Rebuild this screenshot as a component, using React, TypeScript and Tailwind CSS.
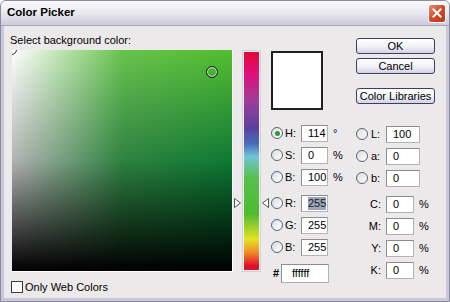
import React from 'react';

const font = { fontFamily: '"Liberation Sans", Arial, sans-serif' };

function Radio({ checked = false }: { checked?: boolean }) {
  return (
    <span className="flex h-[12px] w-[12px] shrink-0 items-center justify-center rounded-full border border-[#56627a] bg-gradient-to-br from-[#dcdcdc] to-white">
      {checked && <span className="h-[5px] w-[5px] rounded-full bg-[#2f9a3c]" />}
    </span>
  );
}

function Field({ value, w, selected = false }: { value: string; w: string; selected?: boolean }) {
  return (
    <div className={`${w} flex h-[17px] items-center border border-[#b4b2b2] border-t-[#8e8c8c] border-l-[#8e8c8c] bg-white pl-[6px] text-[11px] text-black`}>
      {selected ? <span className="bg-[#9aa4bd] leading-[13px] text-[#222]">{value}</span> : value}
    </div>
  );
}

function XpButton({ label }: { label: string }) {
  return (
    <button className="flex h-[16px] w-[79px] items-center justify-center whitespace-nowrap rounded-[3px] border border-[#3f3d68] bg-gradient-to-b from-white via-[#f3f3f6] to-[#d4d3e2] text-[11px] leading-none text-black">
      {label}
    </button>
  );
}

// H / S / B / R / G / B rows
function HsbRow({ name, value, unit, checked, selected }: { name: string; value: string; unit?: string; checked?: boolean; selected?: boolean }) {
  return (
    <div className="flex h-[22px] items-center">
      <Radio checked={checked} />
      <span className="w-[18px] pl-[2px]">{name}</span>
      <Field value={value} w="w-[27px]" selected={selected} />
      {unit && <span className="ml-[5px]">{unit}</span>}
    </div>
  );
}

function LabRow({ name, value }: { name: string; value: string }) {
  return (
    <div className="flex h-[22px] items-center">
      <Radio />
      <span className="w-[18px] pl-[3px]">{name}</span>
      <Field value={value} w="w-[34px]" />
    </div>
  );
}

function CmykRow({ name }: { name: string }) {
  return (
    <div className="flex h-[22px] items-center">
      <span className="w-[30px] pr-[5px] text-right">{name}</span>
      <Field value="0" w="w-[28px]" />
      <span className="ml-[5px]">%</span>
    </div>
  );
}

export default function App() {
  return (
    <div style={font} className="flex h-[302px] w-[450px] flex-col overflow-hidden rounded-t-[6px] border border-[#8b8aa2] bg-[#c9c8d8] text-black">
      {/* title bar */}
      <div className="flex h-[25px] shrink-0 items-center justify-between border-b border-[#a9a8bb] bg-gradient-to-b from-[#fbfbfd] via-[#e8e8f0] to-[#cccbdb] pl-[6px] pr-[3px]">
        <span className="text-[11.5px] font-bold">Color Picker</span>
        <span className="flex h-[19px] w-[18px] items-center justify-center rounded-[3px] border border-white bg-gradient-to-br from-[#ec8a70] via-[#d24a2a] to-[#b8381c]">
          <svg width="10" height="10" viewBox="0 0 10 10">
            <path d="M1.5 1.5l7 7M8.5 1.5l-7 7" stroke="white" strokeWidth="2" strokeLinecap="square" />
          </svg>
        </span>
      </div>

      {/* body */}
      <div className="mx-[3px] mb-[3px] flex flex-1 bg-[#ece9ea] pl-[6px] pt-[6px] text-[11px]">
        {/* left: color field */}
        <div className="flex flex-col">
          <div className="h-[16px] leading-[16px]">Select background color:</div>
          <div className="relative ml-[2px] mt-[2px] h-[222px] w-[221px] overflow-hidden border-b border-r border-white">
            <div className="absolute inset-0 bg-gradient-to-b from-[#52be2c] via-[#10ae48] to-[#08a040]" />
            <div className="absolute inset-0 bg-gradient-to-r from-white via-[#8ccc7a]/40 to-transparent" />
            <div className="absolute inset-0 bg-gradient-to-b from-transparent via-black/30 to-black" />
            <span className="absolute left-[-6px] top-[-6px] h-[11px] w-[11px] rounded-full border border-[#222]" />
            <span className="absolute left-[194px] top-[16px] h-[12px] w-[12px] rounded-full border-[1.5px] border-[#111] shadow-[inset_0_0_0_1px_rgba(255,255,255,0.8)]" />
          </div>
          <div className="mt-[7px] flex items-center">
            <span className="ml-[1px] h-[12px] w-[12px] border border-[#3a3a3a] bg-white" />
            <span className="ml-[2px]">Only Web Colors</span>
          </div>
        </div>

        {/* hue slider */}
        <div className="relative ml-[9px] mt-[18px] h-[222px] w-[19px] border border-[#d2d0d0] bg-[#f4f2f2] p-[1px]">
          <div className="h-full w-full bg-[linear-gradient(to_bottom,#e2073a_0%,#e01078_10%,#a03c98_22%,#5a40a0_35%,#4a6cb8_42%,#70c4d8_48%,#58c04a_58%,#4cbc30_74%,#e4e224_86%,#ef8a24_92%,#e0102e_98%)]" />
          <svg className="absolute left-[-9px] top-[147px]" width="7" height="10" viewBox="0 0 7 10">
            <path d="M0.5 0.5v9l6-4.5z" fill="white" stroke="#555" />
          </svg>
          <svg className="absolute right-[-9px] top-[147px]" width="7" height="10" viewBox="0 0 7 10">
            <path d="M6.5 0.5v9l-6-4.5z" fill="white" stroke="#555" />
          </svg>
        </div>

        {/* middle column */}
        <div className="ml-[10px] flex w-[85px] flex-col">
          <div className="mt-[19px] h-[59px] w-[52px] border-2 border-[#202020] bg-white" />
          <div className="mt-[12px]">
            <HsbRow name="H:" value="114" unit="°" checked />
            <HsbRow name="S:" value="0" unit="%" />
            <HsbRow name="B:" value="100" unit="%" />
          </div>
          <div className="mt-[4px]">
            <HsbRow name="R:" value="255" selected />
            <HsbRow name="G:" value="255" />
            <HsbRow name="B:" value="255" />
          </div>
          <div className="mt-[4px] flex h-[22px] items-center">
            <span className="w-[10px] pl-[2px] font-bold">#</span>
            <div className="flex h-[19px] w-[48px] items-center border border-[#b4b2b2] border-t-[#8e8c8c] border-l-[#8e8c8c] bg-white pl-[10px]">ffffff</div>
          </div>
        </div>

        {/* right column */}
        <div className="flex w-[79px] flex-col">
          <div className="mt-[6px]">
            <XpButton label="OK" />
          </div>
          <div className="mt-[4px]">
            <XpButton label="Cancel" />
          </div>
          <div className="mt-[14px]">
            <XpButton label="Color Libraries" />
          </div>
          <div className="mt-[19px]">
            <LabRow name="L:" value="100" />
            <LabRow name="a:" value="0" />
            <LabRow name="b:" value="0" />
          </div>
          <div className="mt-[4px]">
            <CmykRow name="C:" />
            <CmykRow name="M:" />
            <CmykRow name="Y:" />
            <CmykRow name="K:" />
          </div>
        </div>
      </div>
    </div>
  );
}
